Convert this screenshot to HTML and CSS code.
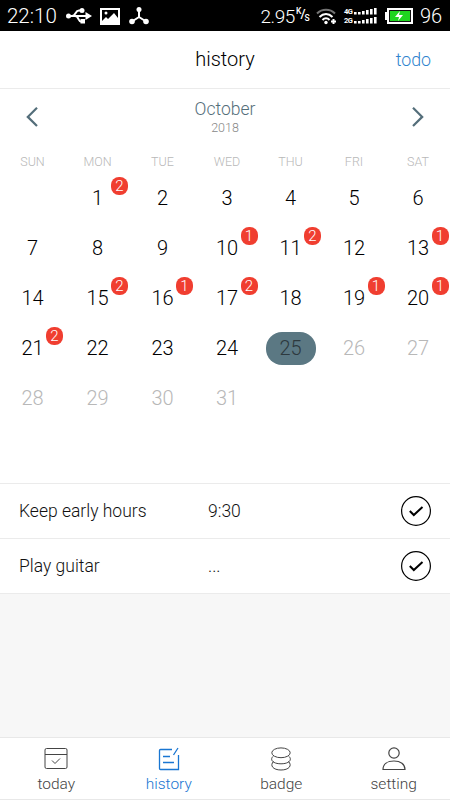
FILE: index.html
```html
<!DOCTYPE html>
<html lang="en">
<head>
    <meta charset="UTF-8">
    <meta name="viewport" content="width=device-width, initial-scale=1.0">
    <title>history</title>
    <link rel="stylesheet" href="styles.css">
</head>
<body>
    <div class="app">
        <div class="status-bar">
            <span class="clock">22:10</span>
            <svg class="usb" width="26" height="18" viewBox="0 0 26 18" fill="none" stroke="#fff" stroke-width="2">
                <path d="M3 9h18M6 9c4 0 3-5.500 7-5.500h3M9 9c4 0 3 5.500 6 5.500h2"></path>
                <circle cx="2.500" cy="9" r="2.500" fill="#fff" stroke="none"></circle>
                <circle cx="16" cy="3.500" r="2.500" fill="#fff" stroke="none"></circle>
                <path d="M14.500 12h4.500v4.500h-4.500zM19.500 5L26 9l-6.500 4z" fill="#fff" stroke="none"></path>
            </svg>
            <svg class="picture" width="20" height="17" viewBox="0 0 20 17">
                <path fill="#fff" fill-rule="evenodd" d="M0 0h20v17H0zM2 2v11l4-4 2 2 6-6 4 5V2z"></path>
                <circle cx="6" cy="5" r="1.500" fill="#fff"></circle>
            </svg>
            <svg class="share" width="20" height="18" viewBox="0 0 20 18" fill="#fff">
                <path d="M10 3v7M10 10l-7 4.500M10 10l7 4.500" fill="none" stroke="#fff" stroke-width="2"></path>
                <circle cx="10" cy="2.500" r="2.500"></circle>
                <circle cx="3" cy="14.500" r="2.800"></circle>
                <circle cx="17" cy="14.500" r="2.800"></circle>
            </svg>
            <span class="speed">2.95</span>
            <span class="speed-unit"><span class="unit-top">K</span><span class="unit-slash">/</span><span class="unit-bottom">S</span></span>
            <svg class="wifi" width="21" height="17" viewBox="0 0 21 17" fill="none" stroke="#fff" stroke-width="2">
                <path d="M1 5.500C6 .5 14 .5 19 5.500" opacity=".45"></path>
                <path d="M3.500 9c4-4 9-4 13 0M6.500 12c2-2.300 5-2.300 7 0"></path>
                <circle cx="10" cy="14.500" r="1.700" fill="#fff" stroke="none"></circle>
                <path d="M15 13.500h5M17.500 11v5" stroke-width="2"></path>
            </svg>
            <div class="signals">
                <div class="signal">
                    <span>4G</span>
                    <svg width="23" height="7" viewBox="0 0 23 7" fill="#fff"><path d="M0 4h2.600v2.500H0zM4 4h2.600v2.500H4zM8 3h2.600v3.500H8zM12 2h2.600v4.500H12zM16 1h2.600v5.500H16zM20 0h2.600v6.500H20z"></path></svg>
                </div>
                <div class="signal">
                    <span>2G</span>
                    <svg width="23" height="7" viewBox="0 0 23 7" fill="#fff"><path d="M0 4h2.600v2.500H0zM4 4h2.600v2.500H4zM8 3h2.600v3.500H8zM12 2h2.600v4.500H12zM16 1h2.600v5.500H16zM20 0h2.600v6.500H20z"></path></svg>
                </div>
            </div>
            <svg class="battery" width="28" height="16" viewBox="0 0 28 16">
                <path d="M2 0h26v16H2v-4H0V4h2z" fill="#fff"></path>
                <path d="M4 2h22v12H4z" fill="#111"></path>
                <path d="M5 3h20v10H5z" fill="#1fd51f"></path>
                <path d="M15 3l-5 6h4l-1 4 5-6h-4z" fill="#fff"></path>
            </svg>
            <span class="percent">96</span>
        </div>

        <div class="header">
            <div></div>
            <div class="header-title">history</div>
            <div class="header-link">todo</div>
        </div>

        <div class="calendar">
            <div class="month-bar">
                <svg width="12" height="20" viewBox="0 0 12 20" fill="none" stroke="#546e7a" stroke-width="2.200">
                    <path d="M11 .8L1.800 9.900l9.200 9.100"></path>
                </svg>
                <div class="month-label">
                    <div class="month">October</div>
                    <div class="year">2018</div>
                </div>
                <svg width="12" height="20" viewBox="0 0 12 20" fill="none" stroke="#546e7a" stroke-width="2.200">
                    <path d="M1 .8l9.200 9.100L1 19"></path>
                </svg>
            </div>
            <div class="weekdays">
                <span>SUN</span><span>MON</span><span>TUE</span><span>WED</span><span>THU</span><span>FRI</span><span>SAT</span>
            </div>
            <div class="days">
                <div class="day"></div>
                <div class="day">1<span class="count">2</span></div>
                <div class="day">2</div>
                <div class="day">3</div>
                <div class="day">4</div>
                <div class="day">5</div>
                <div class="day">6</div>
                <div class="day">7</div>
                <div class="day">8</div>
                <div class="day">9</div>
                <div class="day">10<span class="count">1</span></div>
                <div class="day">11<span class="count">2</span></div>
                <div class="day">12</div>
                <div class="day">13<span class="count">1</span></div>
                <div class="day">14</div>
                <div class="day">15<span class="count">2</span></div>
                <div class="day">16<span class="count">1</span></div>
                <div class="day">17<span class="count">2</span></div>
                <div class="day">18</div>
                <div class="day">19<span class="count">1</span></div>
                <div class="day">20<span class="count">1</span></div>
                <div class="day">21<span class="count">2</span></div>
                <div class="day">22</div>
                <div class="day">23</div>
                <div class="day">24</div>
                <div class="day"><span class="selected">25</span></div>
                <div class="day future">26</div>
                <div class="day future">27</div>
                <div class="day future">28</div>
                <div class="day future">29</div>
                <div class="day future">30</div>
                <div class="day future">31</div>
            </div>
        </div>

        <div class="tasks">
            <div class="task">
                <span class="task-name">Keep early hours</span>
                <span class="task-note">9:30</span>
                <svg width="32" height="32" viewBox="0 0 32 32" fill="none" stroke="#000">
                    <circle cx="16" cy="16" r="14.400" stroke-width="1.200"></circle>
                    <path d="M9.800 16l4 4 8.700-8" stroke-width="2"></path>
                </svg>
            </div>
            <div class="task">
                <span class="task-name">Play guitar</span>
                <span class="task-note">...</span>
                <svg width="32" height="32" viewBox="0 0 32 32" fill="none" stroke="#000">
                    <circle cx="16" cy="16" r="14.400" stroke-width="1.200"></circle>
                    <path d="M9.800 16l4 4 8.700-8" stroke-width="2"></path>
                </svg>
            </div>
        </div>

        <div class="tab-bar">
            <div class="tab">
                <svg width="24" height="24" viewBox="0 0 24 24" fill="none" stroke="currentColor">
                    <rect x="1" y="1.500" width="22" height="20" rx="1.500"></rect>
                    <path d="M1 7.500h22M8 13.500l3 3 5-5"></path>
                </svg>
                <span>today</span>
            </div>
            <div class="tab active">
                <svg width="24" height="24" viewBox="0 0 24 24" fill="none" stroke="currentColor" stroke-width="1.300">
                    <path d="M15 2.500H3.500Q2.500 2.500 2.500 3.500v18q0 1 1 1h18V8M21 1l-4.500 7M6 9.500h7M6 15.500h11"></path>
                </svg>
                <span>history</span>
            </div>
            <div class="tab">
                <svg width="24" height="24" viewBox="0 0 24 24" fill="none" stroke="currentColor">
                    <ellipse cx="12" cy="5.800" rx="9.200" ry="4.900"></ellipse>
                    <path d="M4.500 9C.5 12 3 16.800 12 16.800S23.500 12 19.500 9M4.500 14.500C.5 18.500 4 23 12 23s11.500-4.500 7.500-8.500"></path>
                </svg>
                <span>badge</span>
            </div>
            <div class="tab">
                <svg width="24" height="24" viewBox="0 0 24 24" fill="none" stroke="currentColor" stroke-width="1.200">
                    <circle cx="12" cy="6" r="5.200"></circle>
                    <path d="M1 22.500c0-5.500 4.500-8.500 11-8.500s11 3 11 8.500z"></path>
                </svg>
                <span>setting</span>
            </div>
        </div>
    </div>
</body>
</html>
```
FILE: styles.css
```css
* {
    margin: 0;
    padding: 0;
    box-sizing: border-box;
}

body {
    font-family: Roboto, "Liberation Sans", sans-serif;
    font-weight: 300;
    background-color: #f7f7f7;
}

svg {
    display: block;
    flex-shrink: 0;
}

.app {
    width: 450px;
    height: 800px;
    display: flex;
    flex-direction: column;
    overflow: hidden;
}

.status-bar {
    height: 31px;
    flex-shrink: 0;
    background-color: #000;
    color: #fff;
    display: flex;
    align-items: center;
    padding: 1px 7px 0;
}

.clock {
    width: 59px;
    font-size: 20.5px;
    line-height: 30px;
}

.picture {
    margin-left: 8px;
}

.share {
    margin-left: 9px;
}

.speed {
    margin-left: auto;
    font-size: 19px;
    letter-spacing: -0.4px;
}

.speed-unit {
    display: flex;
    width: 16px;
    font-size: 8.5px;
    font-weight: 500;
    line-height: 10px;
    margin-left: 1px;
}

.unit-top {
    margin-top: -3px;
}

.unit-slash {
    margin: 0 -1px;
    font-size: 13px;
}

.unit-bottom {
    margin-top: 4px;
}

.wifi {
    margin-left: 4px;
}

.signals {
    display: flex;
    flex-direction: column;
    gap: 1px;
    margin-left: 7px;
}

.signal {
    display: flex;
    align-items: center;
    gap: 1px;
    height: 8px;
}

.signal span {
    width: 9px;
    font-size: 7.5px;
    font-weight: 700;
    letter-spacing: -0.6px;
}

.battery {
    margin-left: 8px;
}

.percent {
    width: 23px;
    margin-left: 7px;
    font-size: 20px;
}

.header {
    height: 58px;
    flex-shrink: 0;
    background-color: #fff;
    border-bottom: 1px solid #ebebeb;
    display: grid;
    grid-template-columns: 1fr auto 1fr;
    align-items: center;
    padding: 0 19px 1px;
}

.header-title {
    font-size: 20px;
    color: #000;
}

.header-link {
    text-align: right;
    font-size: 17.8px;
    color: #2f83ce;
}

.calendar {
    height: 394px;
    flex-shrink: 0;
    background-color: #fff;
}

.month-bar {
    display: flex;
    justify-content: space-between;
    align-items: center;
    height: 55px;
    padding: 0 26px;
}

.month-label {
    padding-top: 1px;
    text-align: center;
}

.month {
    font-size: 17.5px;
    line-height: 21px;
    color: #546e7a;
}

.year {
    font-size: 12.5px;
    line-height: 16px;
    color: #888;
}

.weekdays,
.days {
    display: grid;
    grid-template-columns: 65px 65px 65px 64px 63px 64px 64px;
}

.weekdays {
    height: 29px;
    line-height: 36px;
    text-align: center;
    font-size: 12.5px;
    color: #b8b8b8;
}

.days {
    grid-auto-rows: 50px;
}

.day {
    position: relative;
    display: flex;
    align-items: center;
    justify-content: center;
    font-size: 20px;
    color: #000;
}

.day.future {
    color: #b8b8b8;
}

.count {
    position: absolute;
    top: 4px;
    left: calc(50% + 13.5px);
    width: 17px;
    height: 18px;
    border-radius: 8px;
    background-color: #f03e30;
    color: #fff;
    font-size: 15px;
    line-height: 18px;
    text-align: center;
}

.selected {
    width: 50px;
    height: 33px;
    border-radius: 16px;
    background-color: #5b7883;
    color: #2d393e;
    line-height: 32px;
    text-align: center;
}

.tasks {
    border-top: 1px solid #ebebeb;
}

.task {
    height: 55px;
    display: flex;
    align-items: center;
    padding: 0 18px 0 19px;
    background-color: #fff;
    border-bottom: 1px solid #ebebeb;
    font-size: 17.5px;
    color: #111;
}

.task-name {
    width: 189px;
}

.task-note {
    flex: 1;
}

.tab-bar {
    height: 63px;
    margin-top: auto;
    flex-shrink: 0;
    display: flex;
    background-color: #fff;
    border-top: 1px solid #e8e8e8;
    border-bottom: 1px solid #e8e8e8;
}

.tab {
    flex: 1;
    display: flex;
    flex-direction: column;
    align-items: center;
    padding-top: 9px;
    font-size: 15.5px;
    line-height: 26px;
    color: #444;
}

.tab.active {
    color: #1976d2;
}
```
